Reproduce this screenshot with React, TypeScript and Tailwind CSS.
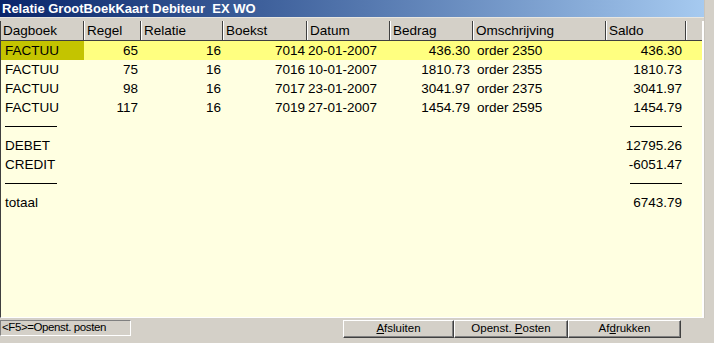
import React from "react";

type Col = { label: string; w: number; align: "left" | "right"; pad: string };

const cols: Col[] = [
  { label: "Dagboek", w: 83, align: "left", pad: "pl-[4px]" },
  { label: "Regel", w: 57, align: "right", pad: "pr-[3px]" },
  { label: "Relatie", w: 82, align: "right", pad: "pr-[2px]" },
  { label: "Boekst", w: 84, align: "right", pad: "pr-[2px]" },
  { label: "Datum", w: 83, align: "left", pad: "pl-[1px]" },
  { label: "Bedrag", w: 83, align: "right", pad: "pr-[3px]" },
  { label: "Omschrijving", w: 133, align: "left", pad: "pl-[4px]" },
  { label: "Saldo", w: 80, align: "right", pad: "pr-[4px]" },
];

const rows: string[][] = [
  ["FACTUU", "65", "16", "7014", "20-01-2007", "436.30", "order 2350", "436.30"],
  ["FACTUU", "75", "16", "7016", "10-01-2007", "1810.73", "order 2355", "1810.73"],
  ["FACTUU", "98", "16", "7017", "23-01-2007", "3041.97", "order 2375", "3041.97"],
  ["FACTUU", "117", "16", "7019", "27-01-2007", "1454.79", "order 2595", "1454.79"],
];

const LINE = "__line__";

const summary: string[][] = [
  [LINE, "", "", "", "", "", "", LINE],
  ["DEBET", "", "", "", "", "", "", "12795.26"],
  ["CREDIT", "", "", "", "", "", "", "-6051.47"],
  [LINE, "", "", "", "", "", "", LINE],
  ["totaal", "", "", "", "", "", "", "6743.79"],
];

function Row({ cells, selected }: { cells: string[]; selected?: boolean }) {
  return (
    <div className={`flex h-[19px] ${selected ? "bg-[#ffff80]" : ""}`}>
      {cols.map((c, i) => {
        const v = cells[i];
        return (
          <div
            key={i}
            style={{ width: c.w }}
            className={`h-[19px] leading-[19px] whitespace-nowrap overflow-hidden flex items-center ${
              c.align === "right" ? "justify-end" : "justify-start"
            } ${c.pad} ${selected && i === 0 ? "bg-[#c4c400]" : ""}`}
          >
            {v === LINE ? <div className="h-px bg-black w-[52px]" /> : v}
          </div>
        );
      })}
      <div className="flex-1" />
    </div>
  );
}

function Btn({ w, children }: { w: number; children: React.ReactNode }) {
  return (
    <div
      style={{ width: w }}
      className="h-[18px] bg-[#d4d0c8] border-t border-l border-t-white border-l-white border-r border-b border-r-[#404040] border-b-[#404040] shadow-[inset_-1px_-1px_0_#808080] flex items-center justify-center text-[11.5px] leading-none text-black"
    >
      {children}
    </div>
  );
}

export default function App() {
  return (
    <div
      className="w-[714px] h-[343px] bg-[#d4d0c8] overflow-hidden text-black"
      style={{ fontFamily: '"Liberation Sans", Arial, sans-serif' }}
    >
      <div className="flex">
        <div className="w-[704px]">
          {/* title bar */}
          <div className="h-[17px] bg-gradient-to-r from-[#0a246a] to-[#a6caf0] flex items-center pl-[2px]">
            <span className="text-white font-bold text-[13px] leading-none whitespace-pre">
              Relatie GrootBoekKaart Debiteur  EX WO
            </span>
          </div>
          <div className="h-[4px] bg-[#d4d0c8] border-t border-t-[#e8e6e0]" />
          {/* grid panel */}
          <div className="border-l border-l-[#404040] border-r-2 border-r-white border-b border-b-white">
            {/* header */}
            <div className="flex h-[20px] bg-[#d4d0c8] border-b border-b-[#404040] text-[13.5px]">
              {cols.map((c, i) => (
                <div
                  key={i}
                  style={{ width: c.w }}
                  className={`h-[19px] leading-[19px] border-l border-l-white border-r border-r-[#404040] pl-[2px] whitespace-nowrap overflow-hidden ${
                    i === 0 ? "border-l-0" : ""
                  }`}
                >
                  {c.label}
                </div>
              ))}
              <div className="flex-1 border-l border-l-white" />
            </div>
            {/* body */}
            <div className="h-[276px] bg-[#ffffe1] text-[13.5px]">
              {rows.map((r, i) => (
                <Row key={i} cells={r} selected={i === 0} />
              ))}
              {summary.map((r, i) => (
                <Row key={"s" + i} cells={r} />
              ))}
            </div>
          </div>
        </div>
        <div className="flex-1 bg-[#d4d0c8] border-l border-l-[#c8c4bc]" />
      </div>
      {/* bottom bar */}
      <div className="flex items-start pt-[2px] h-[25px]">
        <div className="w-[131px] h-[16px] border-t border-l border-t-[#808080] border-l-[#808080] border-b border-r border-b-white border-r-white flex items-center pl-[1px] text-[11.5px] tracking-[-0.4px] leading-none whitespace-nowrap">
          {"<F5>=Openst. posten"}
        </div>
        <div className="ml-[212px] flex">
          <Btn w={111}>
            <span>
              <span className="underline">A</span>fsluiten
            </span>
          </Btn>
          <Btn w={114}>
            <span>
              Openst. <span className="underline">P</span>osten
            </span>
          </Btn>
          <Btn w={113}>
            <span>
              Af<span className="underline">d</span>rukken
            </span>
          </Btn>
        </div>
      </div>
    </div>
  );
}
